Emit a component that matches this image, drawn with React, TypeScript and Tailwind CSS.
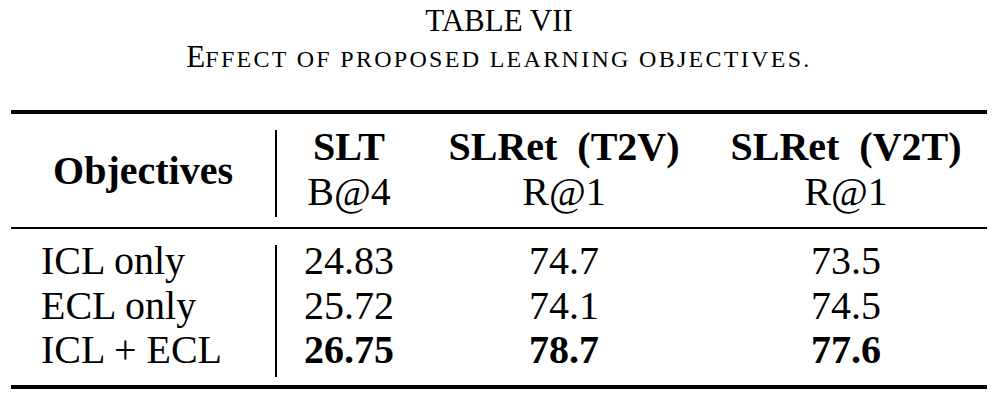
import React from "react";

const rows = [
  { name: "ICL only", slt: "24.83", t2v: "74.7", v2t: "73.5", best: false },
  { name: "ECL only", slt: "25.72", t2v: "74.1", v2t: "74.5", best: false },
  { name: "ICL + ECL", slt: "26.75", t2v: "78.7", v2t: "77.6", best: true },
];

export default function App() {
  return (
    <div className="w-[1006px] h-[405px] bg-white text-black font-['Liberation_Serif','Times_New_Roman',serif]">
      <div className="ml-[11px] w-[976px]">
        {/* caption */}
        <div className="pt-[3px] text-center text-[31px] leading-[36px]">
          <div>TABLE VII</div>
          <div>
            E
            <span className="text-[24px] tracking-[2.3px]">
              FFECT OF PROPOSED LEARNING OBJECTIVES.
            </span>
          </div>
        </div>

        <div className="mt-[33px] h-[4px] bg-black" />

        {/* header */}
        <div className="flex h-[113px] text-[40px] leading-[45px]">
          <div className="w-[264px] flex items-center justify-center font-bold">
            Objectives
          </div>
          <div className="w-[2px] bg-black mt-[16px] mb-[10px]" />
          <div className="w-[144px] pt-[10px] text-center">
            <div className="font-bold">SLT</div>
            <div>B@4</div>
          </div>
          <div className="w-[286px] pt-[10px] text-center">
            <div className="font-bold">SLRet&nbsp; (T2V)</div>
            <div>R@1</div>
          </div>
          <div className="w-[278px] pt-[10px] text-center">
            <div className="font-bold">SLRet&nbsp; (V2T)</div>
            <div>R@1</div>
          </div>
        </div>

        <div className="h-[2px] bg-black" />

        {/* body */}
        <div className="flex h-[156px] text-[40px] leading-[44.5px]">
          <div className="w-[264px] pt-[10px] pl-[30px]">
            {rows.map((r) => (
              <div key={r.name}>{r.name}</div>
            ))}
          </div>
          <div className="w-[2px] bg-black mt-[16px] mb-[8px]" />
          <div className="w-[144px] pt-[10px] text-center">
            {rows.map((r) => (
              <div key={r.name} className={r.best ? "font-bold" : ""}>
                {r.slt}
              </div>
            ))}
          </div>
          <div className="w-[286px] pt-[10px] text-center">
            {rows.map((r) => (
              <div key={r.name} className={r.best ? "font-bold" : ""}>
                {r.t2v}
              </div>
            ))}
          </div>
          <div className="w-[278px] pt-[10px] text-center">
            {rows.map((r) => (
              <div key={r.name} className={r.best ? "font-bold" : ""}>
                {r.v2t}
              </div>
            ))}
          </div>
        </div>

        <div className="h-[4px] bg-black" />
      </div>
    </div>
  );
}
